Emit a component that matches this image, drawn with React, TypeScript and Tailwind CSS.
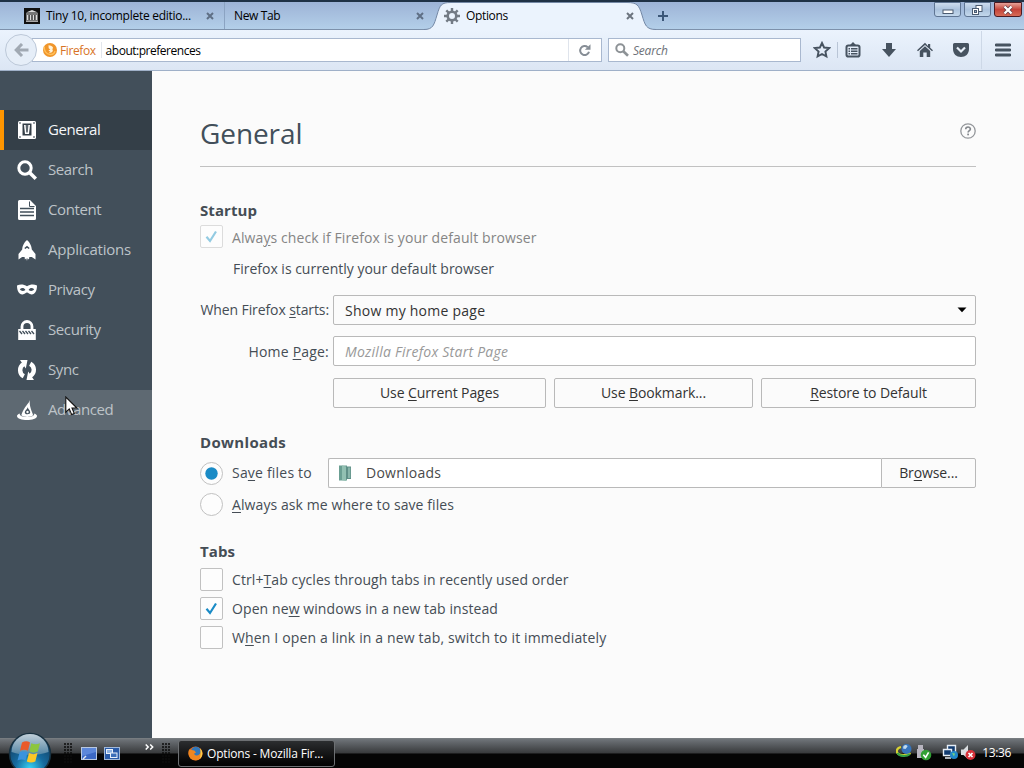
import type { ReactNode } from "react";

function U({ children }: { children: ReactNode }) {
  return <span className="underline decoration-1 underline-offset-2">{children}</span>;
}

function CloseX({ color = "#5f6f85" }: { color?: string }) {
  return (
    <svg width="8" height="8" viewBox="0 0 8 8" className="shrink-0">
      <path d="M1 1l6 6M7 1l-6 6" stroke={color} strokeWidth="2" />
    </svg>
  );
}

function TabStrip() {
  return (
    <div className="flex h-[30px] shrink-0 border-t-2 border-b border-t-[#1f3145] border-b-[#7d91ab] bg-linear-to-b from-[#9db3d6] to-[#b3cfe9] text-[12px] tracking-[-0.35px] text-black">
      <div className="relative flex w-[225px] items-center border-r border-[#8ba3c2] pr-[10px] pl-6">
        <svg width="16" height="16" viewBox="0 0 16 16" className="shrink-0">
          <rect width="16" height="16" fill="#111" />
          <path d="M2 4.500L8 2l6 2.500zM2 5.500h12v1H2zM2.500 7h2v5h-2zM5.700 7h1.700v5H5.700zM8.600 7h1.700v5H8.600zM11.500 7h2v5h-2zM2 12.600h12v1.200H2z" fill="#ddd" />
        </svg>
        <span className="ml-[6px] flex-1 tracking-[-0.28px] whitespace-nowrap">Tiny 10, incomplete editio...</span>
        <CloseX />
      </div>
      <div className="flex w-[211px] items-center pr-3 pl-[9px]">
        <span className="flex-1">New Tab</span>
        <CloseX />
      </div>
      <div className="relative flex w-[212px] items-center pr-[14px] pl-2">
        <svg width="232" height="30" viewBox="0 0 232 30" className="absolute -top-px -left-[12px]">
          <path d="M0 28.500C9 28.500 10 24 13 14S17 1.500 27 1.500H203C213 1.500 215 4 218 14S222 28.500 232 28.500V30H0z" fill="#ebf3fd" />
          <path d="M0 28.500C9 28.500 10 24 13 14S17 1.500 27 1.500H203C213 1.500 215 4 218 14S222 28.500 232 28.500" fill="none" stroke="#7488a5" />
        </svg>
        <svg width="16" height="16" viewBox="0 0 16 16" className="relative shrink-0">
          <circle cx="8" cy="8" r="4.300" fill="none" stroke="#737b85" strokeWidth="2.600" />
          <path d="M8 0v3M8 13v3M0 8h3M13 8h3M2.300 2.300l2.200 2.200M11.500 11.500l2.200 2.200M13.700 2.300l-2.200 2.200M4.500 11.500l-2.200 2.200" stroke="#737b85" strokeWidth="2.400" />
        </svg>
        <span className="relative ml-[6px] flex-1">Options</span>
        <span className="relative flex">
          <CloseX color="#6c747f" />
        </span>
      </div>
      <div className="flex flex-1 items-center pl-[9px]">
        <svg width="12" height="12" viewBox="0 0 12 12">
          <path d="M6 1v10M1 6h10" stroke="#3c5778" strokeWidth="2" />
        </svg>
      </div>
      <div className="flex gap-[3px] pr-[2px]">
        <div className="flex h-[15px] w-[27px] items-center justify-center rounded-b-[3px] border border-[#5f7593] bg-linear-to-b from-[#cddcee] via-[#abc2dd] to-[#c3d8ec]">
          <svg width="12" height="12" viewBox="0 0 12 12">
            <rect x="1" y="6" width="10" height="3.500" fill="#fff" stroke="#4b5b71" />
          </svg>
        </div>
        <div className="flex h-[15px] w-[27px] items-center justify-center rounded-b-[3px] border border-[#5f7593] bg-linear-to-b from-[#cddcee] via-[#abc2dd] to-[#c3d8ec]">
          <svg width="13" height="12" viewBox="0 0 13 12">
            <rect x="5" y="1.500" width="6" height="6" fill="#fff" stroke="#4b5b71" />
            <rect x="1.500" y="4.500" width="6" height="6" fill="#fff" stroke="#4b5b71" />
            <rect x="3.500" y="6.500" width="2" height="2" fill="#9db7d5" stroke="#4b5b71" />
          </svg>
        </div>
        <div className="flex h-[15px] w-[28px] items-center justify-center rounded-b-[3px] border border-[#4b1a22] bg-linear-to-b from-[#e5a198] via-[#c4433a] to-[#d66b57]">
          <svg width="12" height="10" viewBox="0 0 12 10">
            <path d="M2.500 1.500l7 7M9.500 1.500l-7 7" stroke="#5d3a44" strokeWidth="3.800" />
            <path d="M2.500 1.500l7 7M9.500 1.500l-7 7" stroke="#fff" strokeWidth="2.400" />
          </svg>
        </div>
      </div>
    </div>
  );
}

function NavBar() {
  return (
    <div className="flex h-[41px] shrink-0 items-center border-b border-[#9fb0c8] bg-linear-to-b from-[#ebf3fd] to-[#dce6f4] text-[12px] tracking-[-0.4px]">
      <div className="z-10 ml-[5px] flex size-8 shrink-0 items-center justify-center rounded-full border border-[#bcc8d8] bg-[#e6eef8]">
        <svg width="15" height="14" viewBox="0 0 15 14">
          <path d="M14.500 7H3M8 1L2.200 7 8 13" fill="none" stroke="#a1a9b3" strokeWidth="3" />
        </svg>
      </div>
      <div className="-ml-[5px] flex h-6 w-[570px] shrink-0 items-center border border-[#a9b8cf] bg-white">
        <svg width="14" height="14" viewBox="0 0 14 14" className="ml-[10px] shrink-0">
          <circle cx="7" cy="7" r="7" fill="#f0952a" />
          <path d="M5.500 2.200c2 .3 4.200 1 4.600 2.700l-.8 1.200.6 1.400c-.4 2-2.500 2.700-4 1.900l1.500-.7-2-1.200 1.900-1.100-1.600-1.200z" fill="#fff3da" />
          <path d="M1.300 3.500c-.5 4 1.800 7.500 5.700 8 2.500.2 4.500-1.300 5-3.500" fill="none" stroke="#ffc05a" strokeWidth="1.300" />
        </svg>
        <span className="ml-[3px] pt-0.5 text-[#d87325]">Firefox</span>
        <div className="ml-[5px] h-4 w-px bg-[#e2e6ec]" />
        <span className="ml-[4px] flex-1 pt-0.5 tracking-[-0.48px] text-black">about:preferences</span>
        <div className="h-[22px] w-px bg-[#dfe4ec]" />
        <svg width="32" height="14" viewBox="0 0 32 14">
          <path d="M18.700 4.200A4.500 4.500 0 1 0 20 8.700" fill="none" stroke="#868d95" strokeWidth="2" />
          <path d="M21.500 1.200v5.600h-5.600z" fill="#868d95" />
        </svg>
      </div>
      <div className="ml-[6px] flex h-6 w-[193px] shrink-0 items-center border border-[#a9b8cf] bg-white pl-[6px]">
        <svg width="14" height="14" viewBox="0 0 14 14">
          <circle cx="5.300" cy="5.300" r="4" fill="none" stroke="#8d9296" strokeWidth="2" />
          <path d="M8.300 8.300l4.700 4.500" stroke="#8d9296" strokeWidth="2.600" />
        </svg>
        <span className="ml-1 pt-0.5 tracking-[-0.2px] text-[#6d7177] italic">Search</span>
      </div>
      <div className="flex flex-1 items-center text-[#475360]">
        <svg width="18" height="18" viewBox="0 0 18 18" className="ml-3">
          <path d="M9 2l2.100 4.500 5 .6-3.700 3.400 1 4.900L9 13l-4.400 2.400 1-4.900L1.900 7.100l5-.6z" fill="none" stroke="currentColor" strokeWidth="1.900" />
        </svg>
        <div className="ml-[6px] h-4 w-px bg-[#b9c5d6]" />
        <svg width="16" height="16" viewBox="0 0 16 16" className="ml-[7px]">
          <rect x="1.500" y="3.500" width="13" height="11" rx="1.800" fill="none" stroke="currentColor" strokeWidth="2" />
          <path d="M4.500 3.500L8 0l3.500 3.500zM3.500 6H5v1.600H3.500zM6 6h6.500v1.600H6zM3.500 8.500H5v1.600H3.500zM6 8.500h6.500v1.600H6zM3.500 11H5v1.600H3.500zM6 11h6.500v1.600H6z" fill="currentColor" />
        </svg>
        <svg width="16" height="16" viewBox="0 0 16 16" className="ml-5">
          <path d="M5 1h6v6h4l-7 8-7-8h4z" fill="currentColor" />
        </svg>
        <svg width="16" height="16" viewBox="0 0 16 16" className="ml-5">
          <path d="M8 .8L0 8.300l1 1 7-6.300 7 6.300 1-1-2.800-2.600V2H11v2zM2.800 9L8 4.300 13.200 9v6H9.700v-4.500H6.300V15H2.800z" fill="currentColor" />
        </svg>
        <svg width="18" height="16" viewBox="0 0 18 16" className="ml-[19px]">
          <path d="M2.500 1h13A1.500 1.500 0 0 1 17 2.500V7c0 5-3.500 8-8 8s-8-3-8-8V2.500A1.500 1.500 0 0 1 2.500 1z" fill="currentColor" />
          <path d="M5 5.500l4 4 4-4" fill="none" stroke="#e8f0f9" strokeWidth="2.200" />
        </svg>
        <div className="ml-[11px] h-[38px] w-px bg-[#cdd8e7]" />
        <svg width="16" height="14" viewBox="0 0 16 14" className="ml-[13px]">
          <path d="M1 2h14M1 7h14M1 12h14" stroke="currentColor" strokeWidth="2.800" strokeLinecap="round" />
        </svg>
      </div>
    </div>
  );
}

const sidebarIcons: Record<string, ReactNode> = {
  General: (
    <>
      <rect x="1" y="1" width="18" height="18" rx="1.500" fill="#fff" />
      <path d="M5.500 3.500h9v12h-9z" fill="#343f48" />
      <path d="M7 5h6l-1 9H8z" fill="#fff" />
      <path d="M8.600 5h2.800l-.6 7.500H9.200z" fill="#5d666e" />
      <path d="M2.300 2.300h1.400v1.400H2.300zM16.300 2.300h1.400v1.400h-1.400zM2.300 16.300h1.400v1.400H2.300zM16.300 16.300h1.400v1.400h-1.400z" fill="#424f5a" />
    </>
  ),
  Search: (
    <>
      <circle cx="8" cy="8" r="6.200" fill="none" stroke="#fff" strokeWidth="3" />
      <path d="M12.500 12.500l6.300 6.300" stroke="#fff" strokeWidth="3.500" />
    </>
  ),
  Content: (
    <>
      <path d="M2.500 0H13l6 6V18.500a1.500 1.500 0 0 1-1.500 1.500h-15A1.500 1.500 0 0 1 1 18.500v-17A1.500 1.500 0 0 1 2.500 0z" fill="#fff" />
      <path d="M12.500 1.500v5h5" fill="none" stroke="#424f5a" strokeWidth="1" />
      <path d="M3 8.500h14M3 12h14M3 15.500h14" stroke="#424f5a" strokeWidth="1.300" />
    </>
  ),
  Applications: (
    <>
      <path d="M10 0c2 1.500 4.500 5 4.800 9.500L18.500 14v5.500L14.800 17h-2.500L12 19.500l-1.500-1.200L10 21l-.700-2.700-1.400 1.200L7.600 17H5.100l-3.600 2.500V14l3.700-4.500C5.500 5 8 1.500 10 0z" fill="#fff" />
      <path d="M7.800 8.500L10 6.800l2.200 1.700" fill="none" stroke="#424f5a" strokeWidth="1.500" />
    </>
  ),
  Privacy: (
    <>
      <path d="M0 5.500c3.500-1.500 7-1 10 .8 3-1.800 6.500-2.300 10-.8 0 4-1 8.500-5.500 9-2 .1-3.200-1.900-4.500-1.900S7.500 14.600 5.500 14.500C1 14 0 9.500 0 5.500z" fill="#fff" />
      <path d="M2.800 9.300c2-2 4.200-1.700 5.600.6-1.800 1.400-4 1.500-5.600-.6zM17.200 9.300c-2-2-4.200-1.700-5.600.6 1.800 1.400 4 1.500 5.600-.6z" fill="#424f5a" />
    </>
  ),
  Security: (
    <>
      <path d="M5 9V6.500a5 5 0 0 1 10 0V9" fill="none" stroke="#fff" strokeWidth="2.800" />
      <path d="M1.200 9h17.600v11H1.200z" fill="#fff" />
      <path d="M2.500 11l2.500 3M5.500 11L8 14M8.500 11l2.500 3M11.500 11l2.500 3M14.500 11l2.500 3" stroke="#424f5a" strokeWidth="1.300" />
    </>
  ),
  Sync: (
    <>
      <path d="M6.800 16.300A7 7 0 0 1 6.500 4.200M13.200 3.700a7 7 0 0 1 .3 12.100" fill="none" stroke="#fff" strokeWidth="4.400" />
      <path d="M3 0h7.500L8.800 8.500zM17 20H9.500l1.700-8.500z" fill="#fff" />
    </>
  ),
  Advanced: (
    <>
      <path d="M13 0C12 3.500 7 6.500 4.300 15.200c3 2.300 8.800 2.300 11.800 0C15 11 11.800 6 13 0z" fill="#fff" />
      <path d="M2.700 13.500C1 14.200 0 15 0 16c0 5.300 20 5.300 20 0 0-1-1-1.800-2.700-2.500.8 4.800-15.400 4.800-14.600 0z" fill="#fff" />
      <path d="M10.700 7c.2 2.200 2.800 3.300 2.500 5.800-.3 1.800-4.800 2-5.300.2C7.300 10.700 10.300 9.500 10.700 7z" fill="#424f5a" />
      <circle cx="10.500" cy="12" r="1.200" fill="#fff" />
    </>
  ),
};

function Sidebar() {
  return (
    <nav className="flex w-[152px] shrink-0 flex-col bg-[#424f5a] pt-[39px]">
      {Object.keys(sidebarIcons).map((name) => (
        <div
          key={name}
          className={`relative flex h-10 items-center text-[15px] tracking-[-0.4px] ${
            name === "General"
              ? "border-l-4 border-[#ff9500] bg-[#343f48] pl-[13px] text-[#f4f6f8]"
              : name === "Advanced"
                ? "bg-[#5e6972] pl-[17px] text-[#bdc3c8]"
                : "pl-[17px] text-[#bdc3c8]"
          }`}
        >
          <svg width="20" height="20" viewBox="0 0 20 20" className="shrink-0 overflow-visible">
            {sidebarIcons[name]}
          </svg>
          <span className={`ml-[11px] pb-0.5 ${name === "Applications" ? "tracking-[-0.2px]" : ""}`}>{name}</span>
          {name === "Advanced" && (
            <svg width="14" height="21" viewBox="0 0 14 21" className="absolute top-[6px] left-[65px]">
              <path d="M.8 1v15.200l3.500-3.300 2.400 5.700 2.600-1.100L7 12h4.900z" fill="#fff" stroke="#111" strokeWidth="1.100" />
            </svg>
          )}
        </div>
      ))}
    </nav>
  );
}

function Check({ checked, dim, children, className }: { checked?: boolean; dim?: boolean; children: ReactNode; className: string }) {
  return (
    <div className={`flex h-[23px] items-center ${className} ${dim ? "text-[#858585]" : ""}`}>
      <div className={`flex size-[23px] shrink-0 items-center justify-center rounded-[2px] border ${dim ? "border-[#dcdcdc]" : "border-[#c1c1c1]"} bg-[#fdfdfd]`}>
        {checked && (
          <svg width="13" height="13" viewBox="0 0 13 13">
            <path d="M1.500 6.800L5 11l6-9.500" fill="none" stroke={dim ? "#93cbe2" : "#1a8bc6"} strokeWidth="2.200" />
          </svg>
        )}
      </div>
      <span className={`ml-[9px] whitespace-nowrap ${dim ? "pt-0.5" : ""}`}>{children}</span>
    </div>
  );
}

function Heading({ children, className }: { children: ReactNode; className: string }) {
  return <h2 className={`flex h-[22px] items-center text-[15px] font-bold ${className}`}>{children}</h2>;
}

function Button({ children, className }: { children: ReactNode; className: string }) {
  return (
    <button className={`h-[30px] rounded-[2px] border border-[#b9b9b9] bg-[#fbfbfb] text-center tracking-[-0.1px] text-[#333] ${className}`}>
      {children}
    </button>
  );
}

function Preferences() {
  return (
    <main className="flex flex-1 flex-col bg-[#fbfbfb] px-12 text-[14px] leading-[22px] tracking-[0.09px] text-[#454d55]">
      <div className="flex h-[96px] shrink-0 items-center justify-between border-b border-[#c1c1c1] pt-[30px]">
        <h1 className="pb-[2px] text-[28px] leading-[48px] tracking-[-0.1px] text-[#424f5a]">General</h1>
        <svg width="16" height="16" viewBox="0 0 16 16" className="mb-[6px]">
          <circle cx="8" cy="8" r="7.200" fill="none" stroke="#94979b" strokeWidth="1.300" />
          <path d="M5.700 6.300c0-3 4.700-3 4.700-.2 0 1.600-2.300 1.700-2.300 3.500" fill="none" stroke="#85898e" strokeWidth="1.600" />
          <rect x="7.200" y="10.600" width="1.800" height="1.700" fill="#85898e" />
        </svg>
      </div>
      <Heading className="mt-8">Startup</Heading>
      <Check checked dim className="mt-1">
        Alwa<U>y</U>s check if Firefox is your default browser
      </Check>
      <p className="mt-[9px] flex h-6 items-center pl-[33px] tracking-[-0.01px]">Firefox is currently your default browser</p>
      <div className="mt-[14px] flex h-[30px] items-center">
        <label className="w-[129px] text-right tracking-[-0.1px] whitespace-nowrap">
          When Firefox <U>s</U>tarts:
        </label>
        <div className="ml-1 flex h-[30px] flex-1 items-center justify-between rounded-[2px] border border-[#b9b9b9] pr-2 pl-[11px] text-[#333]">
          <span className="pt-0.5 tracking-[0.25px]">Show my home page</span>
          <svg width="10" height="6" viewBox="0 0 10 6">
            <path d="M.5 .5h9L5 5.200z" fill="#000" />
          </svg>
        </div>
      </div>
      <div className="mt-[11px] flex h-[30px] items-center">
        <label className="w-[129px] pt-0.5 text-right tracking-[0.2px]">
          Home <U>P</U>age:
        </label>
        <div className="ml-1 flex h-[30px] flex-1 items-center rounded-[2px] border border-[#b9b9b9] bg-white pt-0.5 pl-[11px] tracking-[0.25px] text-[#999] italic">
          Mozilla Firefox Start Page
        </div>
      </div>
      <div className="mt-3 flex gap-2 pl-[133px]">
        <Button className="w-[213px]">
          Use <U>C</U>urrent Pages
        </Button>
        <Button className="w-[199px]">
          Use <U>B</U>ookmark...
        </Button>
        <Button className="w-[215px]">
          <U>R</U>estore to Default
        </Button>
      </div>
      <Heading className="mt-[23px] tracking-[0.35px]">Downloads</Heading>
      <div className="mt-[5px] flex h-[30px] items-center">
        <div className="flex size-[23px] items-center justify-center rounded-full border border-[#c1c1c1] bg-[#fdfdfd]">
          <svg width="13" height="13" viewBox="0 0 13 13">
            <circle cx="6.500" cy="6.500" r="6.200" fill="#1a8bc6" />
          </svg>
        </div>
        <span className="ml-[9px] w-24 tracking-[0.2px]">
          Sa<U>v</U>e files to
        </span>
        <div className="flex h-[30px] flex-1 items-center rounded-l-[2px] border border-r-0 border-[#b9b9b9] bg-white pl-[9px] text-[#4a4a4a]">
          <svg width="14" height="16" viewBox="0 0 14 16">
            <path d="M1 .5h8v15H1z" fill="#6b9f93" />
            <path d="M4 .5l4 1V16l-4-1z" fill="#92c0b2" />
            <path d="M8 1.500h5v12.500H8z" fill="#5f8f87" />
            <path d="M10 2.500h2.300v10.500H10z" fill="#88b5aa" />
          </svg>
          <span className="ml-[14px] tracking-[0.25px]">Downloads</span>
        </div>
        <Button className="w-[95px] rounded-l-none">
          Br<U>o</U>wse...
        </Button>
      </div>
      <div className="mt-[5px] flex h-[23px] items-center">
        <div className="size-[23px] rounded-full border border-[#c1c1c1] bg-[#fdfdfd]" />
        <span className="ml-[9px]">
          <U>A</U>lways ask me where to save files
        </span>
      </div>
      <Heading className="mt-6">Tabs</Heading>
      <Check className="mt-[6px]">
        Ctrl+<U>T</U>ab cycles through tabs in recently used order
      </Check>
      <Check checked className="mt-[6px]">
        Open ne<U>w</U> windows in a new tab instead
      </Check>
      <Check className="mt-[6px] tracking-[0.15px]">
        W<U>h</U>en I open a link in a new tab, switch to it immediately
      </Check>
    </main>
  );
}

function Grip() {
  return (
    <svg width="8" height="21" viewBox="0 0 8 21">
      {[0, 3, 6, 9, 12, 15, 18].map((y) => (
        <path key={y} d={`M0 ${y + 1}h2M3 ${y + 1}h2M6 ${y + 1}h2`} stroke="#0c0c0c" strokeWidth="1.400" />
      ))}
    </svg>
  );
}

function Taskbar() {
  return (
    <footer className="flex h-[30px] shrink-0 items-center border-t border-[#777c80] bg-linear-to-b from-[#70757a] from-0% via-[#393b3d] via-48% to-[#050505] to-52% text-[12px] tracking-[-0.35px] text-white">
      <div className="relative ml-2 h-full w-[45px]">
        <svg width="44" height="36" viewBox="0 0 44 36" className="absolute -top-[7px] left-0">
          <defs>
            <radialGradient id="orb" cx=".5" cy=".85" r=".8">
              <stop offset="0" stopColor="#35d3f5" />
              <stop offset=".45" stopColor="#166a9e" />
              <stop offset="1" stopColor="#123a5c" />
            </radialGradient>
            <linearGradient id="gloss" x1="0" y1="0" x2="0" y2="1">
              <stop offset="0" stopColor="#e0eaf0" />
              <stop offset="1" stopColor="#5c8ba8" />
            </linearGradient>
          </defs>
          <circle cx="22" cy="22" r="20.500" fill="url(#orb)" stroke="#17303f" strokeWidth="1.500" />
          <path d="M3.500 20a18.500 18 0 0 1 37 0c-11 4-26 4-37 0z" fill="url(#gloss)" opacity=".85" />
          <path d="M14 10.500c3-1.600 5.500-1.500 8 0l-2 8.300c-2.500-1.500-5-1.500-8 0z" fill="#ea5a2a" />
          <path d="M23.300 11.200c3 1.500 5.500 1.500 8.700 0l-2.200 8.300c-3 1.500-5.500 1.500-8.400 0z" fill="#8cc63e" />
          <path d="M11.700 20.300c3-1.600 5.500-1.500 8 0l-2.200 8.200c-2.500-1.500-5-1.500-8 0z" fill="#3b93dd" />
          <path d="M21 21c3 1.500 5.500 1.500 8.500 0l-2.200 8.400c-3 1.500-5.500 1.500-8.500 0z" fill="#fcc726" />
        </svg>
      </div>
      <div className="ml-[11px]">
        <Grip />
      </div>
      <svg width="16" height="14" viewBox="0 0 16 14" className="ml-[9px]">
        <rect x=".5" y=".5" width="15" height="12" fill="#3b68c4" stroke="#b8c8e0" />
        <path d="M1 1h14v4L1 9z" fill="#5c87da" />
        <path d="M2 12l3-3" stroke="#e1e8f3" strokeWidth="1.500" />
      </svg>
      <svg width="16" height="14" viewBox="0 0 16 14" className="ml-[7px]">
        <rect x=".5" y=".5" width="15" height="12" fill="#2a5ba8" stroke="#9fb8da" />
        <rect x="2.500" y="2.500" width="6" height="4" fill="#8fb3e2" stroke="#e9f0fa" />
        <rect x="6.500" y="6" width="6.500" height="4.500" fill="#3c6fb9" stroke="#e9f0fa" />
      </svg>
      <span className="mb-[13px] ml-[25px] w-[10px]">
        <svg width="9" height="6" viewBox="0 0 9 6">
          <path d="M.7 .5L3.200 3 .7 5.500M5.200 .5L7.700 3 5.200 5.500" fill="none" stroke="#fff" strokeWidth="1.500" />
        </svg>
      </span>
      <div className="ml-[7px]">
        <Grip />
      </div>
      <div className="ml-2 flex h-[27px] w-[157px] items-center rounded-[3px] border border-[#6d7073] bg-linear-to-b from-[#2c2e30] to-[#030303] pl-[9px]">
        <svg width="15" height="15" viewBox="0 0 15 15" className="shrink-0">
          <circle cx="7.500" cy="7.500" r="7" fill="#e36a1c" />
          <circle cx="8" cy="5.800" r="5" fill="#3277b8" />
          <path d="M1.200 3.200C3 4 4.500 4 6.300 4.500L8 6.500 6 7.800c1 2 3.500 2.500 5.500.5 1.500-1.500 1.500-4 .7-5.600 3.300 2.800 2.800 8-.4 10.300-3.400 2.400-8.300 1.400-10.300-2C0 8.500.2 5.500 1.200 3.200z" fill="#ef861f" />
          <path d="M12 2.500c3.300 3 2.800 8-.4 10.300 1-2.300 1.600-6 .4-10.300z" fill="#fbd24a" />
        </svg>
        <span className="ml-1 tracking-[-0.18px] whitespace-nowrap">Options - Mozilla Fir...</span>
      </div>
      <div className="flex-1" />
      <svg width="17" height="16" viewBox="0 0 17 16" className="mb-[6px]">
        <path d="M5 4C0 5 0 9.500 2.500 11s8 1.500 12-1" fill="none" stroke="#d9d332" strokeWidth="2.200" />
        <path d="M1.500 10c2 3.500 9 4 12.500 1" fill="none" stroke="#35a045" strokeWidth="2.200" />
        <circle cx="10.500" cy="6" r="5" fill="#3674bb" />
        <path d="M7.500 3c2-2 4-1 4 .5L9.500 6 7 5.500z" fill="#c1d9ed" />
      </svg>
      <svg width="17" height="17" viewBox="0 0 17 17" className="mb-[3px] ml-[2px]">
        <path d="M3 1h5v4H3zM2 5h7v9H2z" fill="#b7b4bf" />
        <circle cx="11" cy="11" r="5.300" fill="#32a034" />
        <path d="M8.300 10.800l2.300 2.500 3-5" fill="none" stroke="#fff" strokeWidth="1.600" />
      </svg>
      <svg width="17" height="16" viewBox="0 0 17 16" className="mb-[4px] ml-[10px]">
        <path d="M5.500 1.500h8v7h-8z" fill="#123b6f" stroke="#e6edf5" strokeWidth="1.400" />
        <path d="M1.500 5.500h8v6h-8zM3 14h6" fill="#123b6f" stroke="#e6edf5" strokeWidth="1.400" />
        <circle cx="12" cy="11" r="4" fill="#2188ca" />
        <path d="M10 9l3 .5-1 3z" fill="#78d67d" />
      </svg>
      <svg width="16" height="17" viewBox="0 0 16 17" className="mb-[3px] ml-px">
        <path d="M1 5.500h2.500L8 1v14l-4.500-4H1z" fill="#d9dde0" />
        <circle cx="10.500" cy="11" r="5" fill="#d7323a" />
        <path d="M8.500 9l4 4M12.500 9l-4 4" stroke="#fff" strokeWidth="1.700" />
      </svg>
      <span className="mr-[13px] ml-[6px] pb-0.5">13:36</span>
    </footer>
  );
}

export default function App() {
  return (
    <div className="flex h-[768px] w-[1024px] flex-col overflow-hidden bg-[#fbfbfb] font-['Open_Sans',sans-serif]">
      <TabStrip />
      <NavBar />
      <div className="flex min-h-0 flex-1">
        <Sidebar />
        <Preferences />
      </div>
      <Taskbar />
    </div>
  );
}
